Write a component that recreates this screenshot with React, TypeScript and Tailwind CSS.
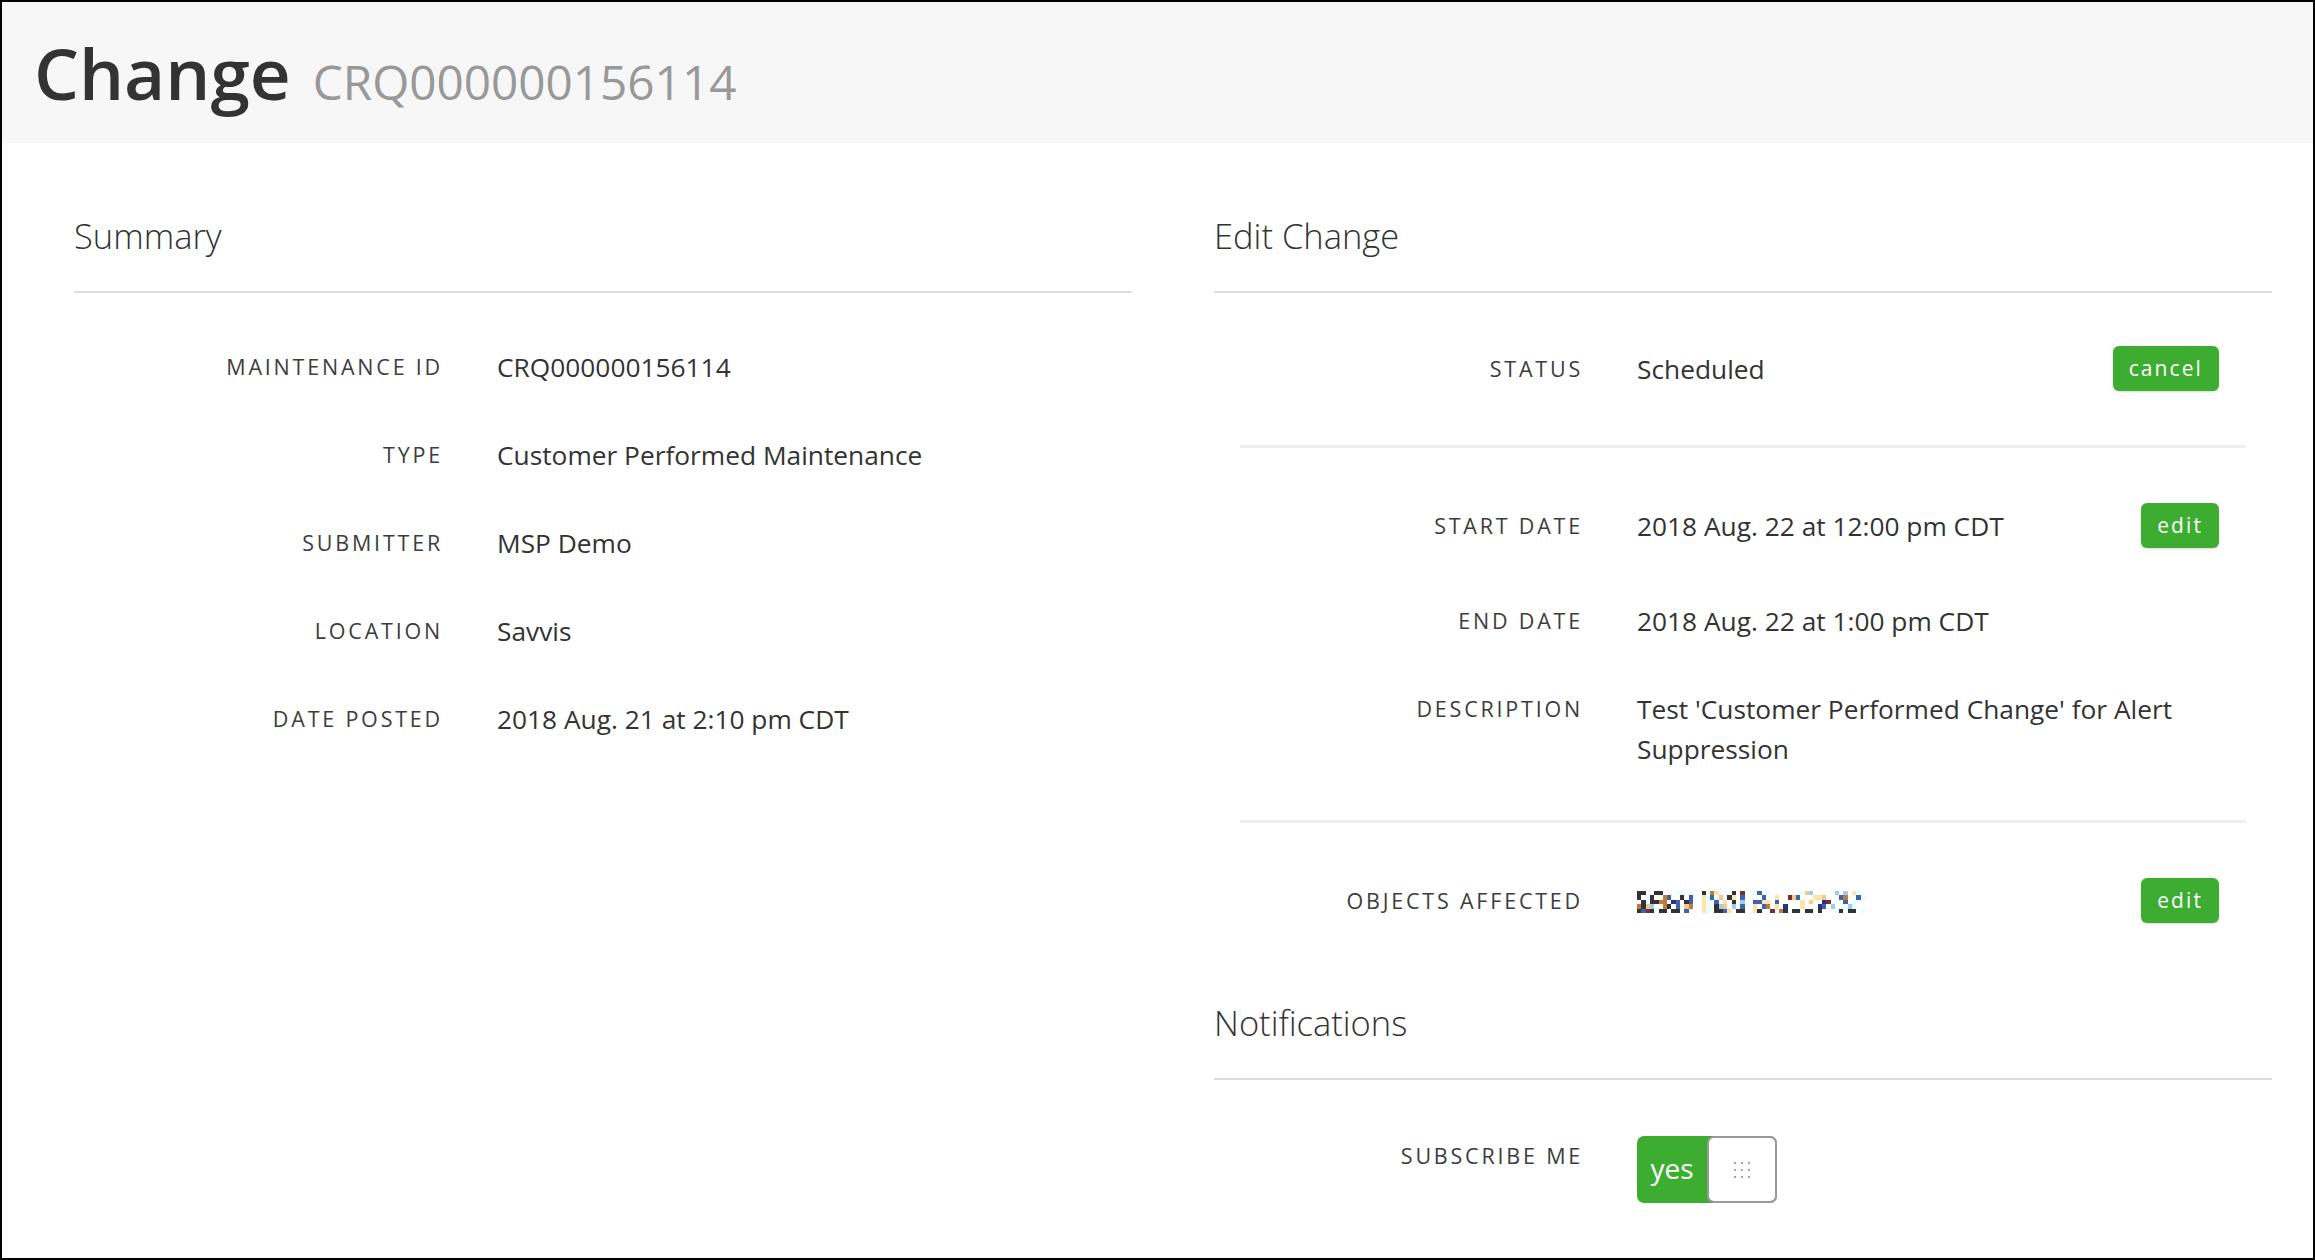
import React from "react";

const font = { fontFamily: '"Open Sans", "Noto Sans", Arial, sans-serif' };

const mosaicRows = [
  "dd..dd...cc.c..d.oyc..d.r...b.c.......cpl.....l.l.y..yc",
  "d.cd..ob..d.b..ycbcp.dy.b....b..y..rpb...yyp...bo..bc.",
  ".d.ddoo.nb.db..yc.b.y.d.l..bbyy.b.....y.p..nr...b.c..l",
  "odpl..od.b.po..yc.dlp.l.b..y.bo.y.n...y...nb.l...lc...",
  "dbrd.dd.dd.b...yc.ddby.dd..yd..r.od.dd.dd.d...cd.dd.c.",
];
const palette: Record<string, string> = {
  d: "#333333",
  b: "#3a64b0",
  n: "#2d2d8a",
  o: "#c27b35",
  y: "#ffe4a8",
  c: "#e3ffff",
  l: "#9cccf0",
  r: "#7b2e2e",
  p: "#f5c88a",
};

function Mosaic() {
  const cols = 53;
  return (
    <svg width="228" height="22" viewBox={`0 0 ${cols} 5`} preserveAspectRatio="none" shapeRendering="crispEdges" className="mt-[2px]">
      {mosaicRows.map((row, y) =>
        row
          .padEnd(cols, ".")
          .slice(0, cols)
          .split("")
          .map((ch, x) =>
            palette[ch] ? <rect key={`${x}-${y}`} x={x} y={y} width="1" height="1" fill={palette[ch]} /> : null
          )
      )}
    </svg>
  );
}

const GreenButton = ({ children }: { children: React.ReactNode }) => (
  <button className="shrink-0 h-[45px] px-[16px] rounded-[6px] bg-[#3dad32] text-white text-[21px] tracking-[0.1em] leading-none shadow-[0_1px_2px_rgba(0,0,0,0.15)]">
    {children}
  </button>
);

type RowProps = { label: string; children: React.ReactNode; action?: React.ReactNode; top?: boolean; className?: string };
const Row: React.FC<RowProps> = ({ label, children, action, top, className = "" }) => (
  <div className={`flex ${top ? "items-start" : "items-center"} py-[24px] ${className}`}>
    <div className="w-[369px] shrink-0 text-right uppercase text-[21.5px] tracking-[0.13em] text-[#3d3d3d] leading-[40px]">
      {label}
    </div>
    <div className="flex-1 ml-[54px] text-[26.3px] leading-[40px] text-[#333]">{children}</div>
    {action}
  </div>
);

const Heading = ({ children, className = "" }: { children: React.ReactNode; className?: string }) => (
  <div className={className}>
    <h2 className="text-[34.5px] leading-[39px] text-[#333] font-light">{children}</h2>
    <div className="mt-[36px] h-[2px] bg-[#dddddd]" />
  </div>
);

export default function App() {
  return (
    <div style={font} className="w-[2315px] h-[1260px] border-2 border-black bg-white overflow-hidden box-border">
      <div className="h-[141px] bg-[#f7f7f7] pl-[32px] pt-[35px] flex items-baseline gap-[22px]">
        <h1 className="text-[71px] leading-none font-semibold text-[#333]">Change</h1>
        <span className="text-[47.7px] leading-none text-[#999]">CRQ000000156114</span>
      </div>

      <div className="grid grid-cols-[1058px_1058px] gap-[82px] pl-[72px]">
        <section className="pt-[73px]">
          <Heading>Summary</Heading>
          <div className="mt-[30px]">
            <Row label="Maintenance ID">CRQ000000156114</Row>
            <Row label="Type">Customer Performed Maintenance</Row>
            <Row label="Submitter">MSP Demo</Row>
            <Row label="Location">Savvis</Row>
            <Row label="Date Posted">2018 Aug. 21 at 2:10 pm CDT</Row>
          </div>
        </section>

        <section className="pt-[73px]">
          <Heading>Edit Change</Heading>
          <div className="pr-[53px] pt-[29px] pb-[30px]">
            <Row label="Status" action={<GreenButton>cancel</GreenButton>}>Scheduled</Row>
          </div>
          <div className="mx-[26px] h-[3px] bg-[#eeeeee]" />
          <div className="pr-[53px] pt-[31px] pb-[27px]">
            <Row label="Start Date" action={<GreenButton>edit</GreenButton>} className="mb-[5px]">
              2018 Aug. 22 at 12:00 pm CDT
            </Row>
            <Row label="End Date">2018 Aug. 22 at 1:00 pm CDT</Row>
            <Row label="Description" top>Test 'Customer Performed Change' for Alert Suppression</Row>
          </div>
          <div className="mx-[26px] h-[3px] bg-[#eeeeee]" />
          <div className="pr-[53px] pt-[31px]">
            <Row label="Objects Affected" action={<GreenButton>edit</GreenButton>}>
              <Mosaic />
            </Row>
          </div>

          <Heading className="mt-[56px]">Notifications</Heading>
          <div className="pr-[53px] pt-[32px]">
            <Row label="Subscribe Me" top>
              <div className="flex w-[140px] h-[67px] rounded-[7px] bg-[#3dad32]">
                <div className="w-[70px] flex items-center justify-center text-white text-[28px] leading-none pb-[3px]">yes</div>
                <div className="flex-1 rounded-[7px] border-2 border-[#999] bg-white flex items-center justify-center">
                  <div className="grid grid-cols-3 gap-[5px]">
                    {Array.from({ length: 9 }).map((_, i) => (
                      <span key={i} className="w-[2px] h-[2px] bg-[#888] rounded-full" />
                    ))}
                  </div>
                </div>
              </div>
            </Row>
          </div>
        </section>
      </div>
    </div>
  );
}
